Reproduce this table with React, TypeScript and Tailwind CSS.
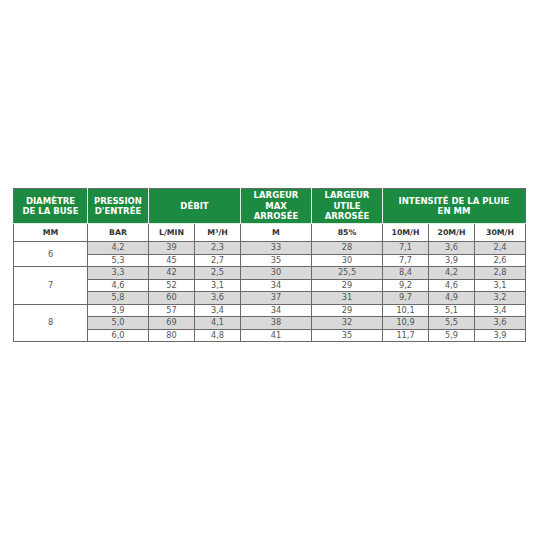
import React from "react";

const rows: string[][] = [
  ["4,2", "39", "2,3", "33", "28", "7,1", "3,6", "2,4"],
  ["5,3", "45", "2,7", "35", "30", "7,7", "3,9", "2,6"],
  ["3,3", "42", "2,5", "30", "25,5", "8,4", "4,2", "2,8"],
  ["4,6", "52", "3,1", "34", "29", "9,2", "4,6", "3,1"],
  ["5,8", "60", "3,6", "37", "31", "9,7", "4,9", "3,2"],
  ["3,9", "57", "3,4", "34", "29", "10,1", "5,1", "3,4"],
  ["5,0", "69", "4,1", "38", "32", "10,9", "5,5", "3,6"],
  ["6,0", "80", "4,8", "41", "35", "11,7", "5,9", "3,9"],
];

const diam: Record<number, [string, number]> = { 0: ["6", 2], 2: ["7", 3], 5: ["8", 3] };

const widths = [74, 61, 46, 46, 71, 71, 46, 46, 51];

export default function App() {
  const th = "bg-[#1c8a41] text-white font-bold text-[8.5px] leading-[10.5px] text-center align-middle border border-[#e3efe6] px-0";
  const sub = "text-[#333] font-bold text-[7.8px] text-center align-middle border border-[#6a6a6a] h-[18px] p-0";
  const td = "text-[#555] text-[8.2px] leading-[11px] text-center align-middle border border-[#6a6a6a] h-[12.5px] p-0";
  return (
    <div className="w-[540px] h-[540px] bg-white pt-[188px] pl-[13px]" style={{ fontFamily: '"DejaVu Sans", sans-serif' }}>
      <table className="border-collapse table-fixed w-[512px] border border-[#6a6a6a]">
        <colgroup>
          {widths.map((w, i) => (
            <col key={i} style={{ width: w }} />
          ))}
        </colgroup>
        <thead>
          <tr className="h-[35px]">
            <th className={th + " border-l-[#6a6a6a] border-t-[#6a6a6a]"}>DIAMÈTRE<br />DE LA BUSE</th>
            <th className={th + " border-t-[#6a6a6a]"}>PRESSION<br />D'ENTRÉE</th>
            <th className={th + " border-t-[#6a6a6a]"} colSpan={2}>DÉBIT</th>
            <th className={th + " border-t-[#6a6a6a]"}>LARGEUR<br />MAX<br />ARROSÉE</th>
            <th className={th + " border-t-[#6a6a6a]"}>LARGEUR<br />UTILE<br />ARROSÉE</th>
            <th className={th + " border-r-[#6a6a6a] border-t-[#6a6a6a]"} colSpan={3}>INTENSITÉ DE LA PLUIE<br />EN MM</th>
          </tr>
          <tr>
            {["MM", "BAR", "L/MIN", "M³/H", "M", "85%", "10M/H", "20M/H", "30M/H"].map((t) => (
              <td key={t} className={sub}>{t}</td>
            ))}
          </tr>
        </thead>
        <tbody>
          {rows.map((r, i) => (
            <tr key={i}>
              {diam[i] && (
                <td rowSpan={diam[i][1]} className={td + " bg-white"}>{diam[i][0]}</td>
              )}
              {r.map((v, j) => (
                <td key={j} className={td + (i % 2 === 0 ? " bg-[#d9d9d9]" : " bg-white")}>{v}</td>
              ))}
            </tr>
          ))}
        </tbody>
      </table>
    </div>
  );
}
